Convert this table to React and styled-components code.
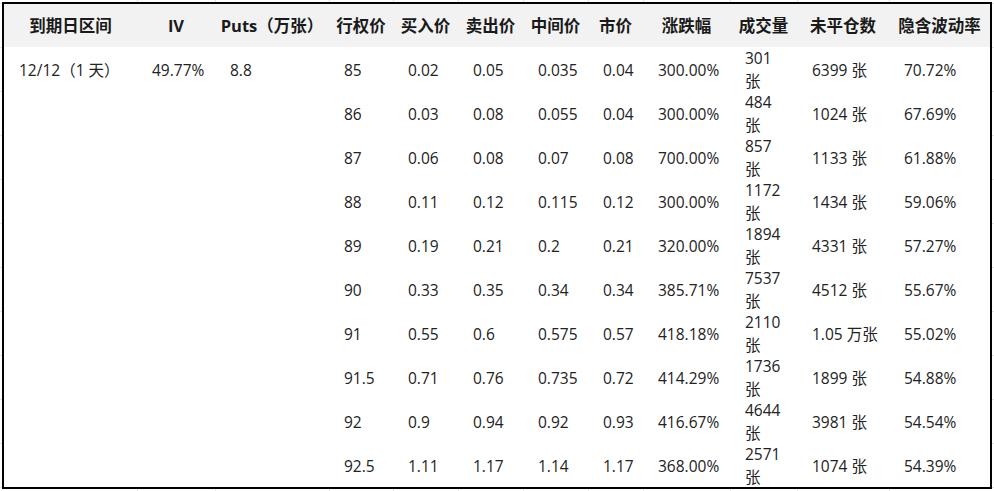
import React from 'react';
import styled, { createGlobalStyle } from 'styled-components';

const GlobalStyle = createGlobalStyle`
  html, body {
    margin: 0;
    padding: 0;
    background: #fff;
  }
  body {
    font-family: "Open Sans", "Noto Sans CJK SC", sans-serif;
    color: #222;
  }
`;

// faint spreadsheet grid that peeks out around the table
const gridX = [137, 215, 329, 393, 458, 523, 588, 643, 730, 797, 889];
const gridLines = gridX
  .map(x => `linear-gradient(#e4e4e4, #e4e4e4) ${x}px 0 / 1px 100% no-repeat`)
  .join(', ');

const Page = styled.div`
  width: 994px;
  height: 491px;
  padding: 2px 0 0 2px;
  box-sizing: border-box;
  overflow: hidden;
  background: ${gridLines},
    repeating-linear-gradient(to bottom, #e4e4e4 0 1px, transparent 1px 44px) 0 3px / 100% 100%;
`;

const cols = '133px 78px 114px 64px 65px 65px 65px 55px 87px 67px 92px 101px';

const Table = styled.div`
  width: 990px;
  height: 487px;
  box-sizing: border-box;
  border: 2px solid #000;
  background: #fff;
  display: flex;
  flex-direction: column;
`;

const Row = styled.div`
  display: grid;
  grid-template-columns: ${cols};
  height: ${p => (p.$head ? '43px' : '44px')};
  flex: none;
  background: ${p => (p.$head ? '#f2f2f2' : '#fff')};
`;

const HeadCell = styled.div`
  display: flex;
  align-items: center;
  justify-content: center;
  padding-bottom: 1px;
  font-size: 16.5px;
  font-weight: 700;
  white-space: nowrap;
  color: #1a1a1a;
`;

const Cell = styled.div`
  display: flex;
  align-items: center;
  padding-left: 15px;
  font-size: 15.5px;
  line-height: 23px;
  color: #222;
  white-space: ${p => (p.$wrap ? 'normal' : 'nowrap')};
`;

const Volume = styled.span`
  display: block;
  width: 44px;
`;

const headers = ['到期日区间', 'IV', 'Puts（万张）', '行权价', '买入价', '卖出价', '中间价', '市价', '涨跌幅', '成交量', '未平仓数', '隐含波动率'];

const rows = [
  ['85', '0.02', '0.05', '0.035', '0.04', '300.00%', '301', '6399 张', '70.72%'],
  ['86', '0.03', '0.08', '0.055', '0.04', '300.00%', '484', '1024 张', '67.69%'],
  ['87', '0.06', '0.08', '0.07', '0.08', '700.00%', '857', '1133 张', '61.88%'],
  ['88', '0.11', '0.12', '0.115', '0.12', '300.00%', '1172', '1434 张', '59.06%'],
  ['89', '0.19', '0.21', '0.2', '0.21', '320.00%', '1894', '4331 张', '57.27%'],
  ['90', '0.33', '0.35', '0.34', '0.34', '385.71%', '7537', '4512 张', '55.67%'],
  ['91', '0.55', '0.6', '0.575', '0.57', '418.18%', '2110', '1.05 万张', '55.02%'],
  ['91.5', '0.71', '0.76', '0.735', '0.72', '414.29%', '1736', '1899 张', '54.88%'],
  ['92', '0.9', '0.94', '0.92', '0.93', '416.67%', '4644', '3981 张', '54.54%'],
  ['92.5', '1.11', '1.17', '1.14', '1.17', '368.00%', '2571', '1074 张', '54.39%'],
];

export default function App() {
  return (
    <>
      <GlobalStyle />
      <Page>
        <Table>
          <Row $head>
            {headers.map(h => (
              <HeadCell key={h}>{h}</HeadCell>
            ))}
          </Row>
          {rows.map((r, i) => (
            <Row key={r[0]}>
              <Cell>{i === 0 ? '12/12（1 天）' : ''}</Cell>
              <Cell>{i === 0 ? '49.77%' : ''}</Cell>
              <Cell>{i === 0 ? '8.8' : ''}</Cell>
              {r.slice(0, 6).map((v, j) => (
                <Cell key={j}>{v}</Cell>
              ))}
              <Cell $wrap>
                <Volume>{r[6]}<br />张</Volume>
              </Cell>
              <Cell>{r[7]}</Cell>
              <Cell>{r[8]}</Cell>
            </Row>
          ))}
        </Table>
      </Page>
    </>
  );
}
